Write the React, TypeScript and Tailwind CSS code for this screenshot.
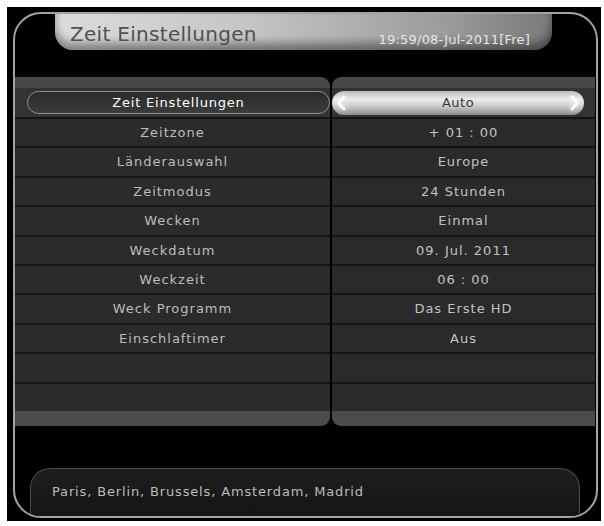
import React from 'react'

const rows: [string, string][] = [
  ['Zeitzone', '+ 01 : 00'],
  ['Länderauswahl', 'Europe'],
  ['Zeitmodus', '24 Stunden'],
  ['Wecken', 'Einmal'],
  ['Weckdatum', '09. Jul. 2011'],
  ['Weckzeit', '06 : 00'],
  ['Weck Programm', 'Das Erste HD'],
  ['Einschlaftimer', 'Aus'],
  ['', ''],
  ['', ''],
]

function Chevron({ dir }: { dir: 'left' | 'right' }) {
  return (
    <svg width="10" height="16" viewBox="0 0 10 16" className="drop-shadow-[0_0_3px_rgba(255,255,255,0.9)]">
      <path
        d={dir === 'left' ? 'M8 2 L2.5 8 L8 14' : 'M2 2 L7.5 8 L2 14'}
        fill="none"
        stroke="#ffffff"
        strokeWidth="2.6"
        strokeLinecap="round"
        strokeLinejoin="round"
      />
    </svg>
  )
}

export default function App() {
  return (
    <div className="w-[604px] h-[526px] bg-white pt-[7px] pl-[7px] pr-[3px] pb-[5px] font-['DejaVu_Sans',sans-serif]">
      <div className="h-full bg-black pt-[5px] pl-[6px] pr-[3px] pb-[3px]">
        <div className="h-full rounded-[28px] border-2 border-[#a3a3a3] flex flex-col overflow-hidden">
          {/* header tab */}
          <div className="ml-[40px] w-[497px] h-[36px] shrink-0 rounded-b-[18px] bg-[linear-gradient(to_right,#dcdcdc,#c4c4c4_40%,#9c9c9c_78%,#7a7a7a)] shadow-[inset_0_-7px_9px_rgba(0,0,0,0.4)] flex items-end justify-between pl-[15px] pr-[22px] pb-[4px]">
            <span className="text-[20px] leading-[24px] text-[#505050] tracking-[0.3px]">Zeit Einstellungen</span>
            <span className="text-[13px] leading-[15px] text-[#e6e6e6] tracking-[0.2px] mb-[-1px]">19:59/08-Jul-2011[Fre]</span>
          </div>

          {/* table */}
          <div className="mt-[27px] flex flex-col pr-[1px]">
            <div className="flex gap-[2px] h-[11px]">
              <div className="w-[315px] bg-[#484848] rounded-tr-[9px]" />
              <div className="flex-1 bg-[#484848] rounded-tl-[9px]" />
            </div>

            {/* selected row */}
            <div className="flex gap-[2px] h-[29px]">
              <div className="w-[315px] bg-[#333333] flex items-center pl-[12px]">
                <div className="w-full h-[23px] rounded-full border-[1.5px] border-[#8e8e8e] bg-[linear-gradient(to_bottom,#2a2a2a,#3c3c3c)] flex items-center justify-center">
                  <span className="text-[13px] text-white tracking-[0.8px]">Zeit Einstellungen</span>
                </div>
              </div>
              <div className="flex-1 bg-[#333333] flex items-center pr-[11px]">
                <div className="w-full h-[24px] rounded-full bg-[linear-gradient(to_bottom,#b9b9b9,#ececec_35%,#c9c9c9_65%,#8a8a8a)] flex items-center justify-between px-[4px]">
                  <Chevron dir="left" />
                  <span className="text-[13px] text-[#3a3a3a] tracking-[0.5px]">Auto</span>
                  <Chevron dir="right" />
                </div>
              </div>
            </div>

            {rows.map(([label, value], i) => (
              <div key={i} className="flex gap-[2px] h-[29.4px]">
                <div className="w-[315px] bg-[#2b2b2b] border-t-2 border-[#131313] flex items-center justify-center">
                  <span className="text-[13px] text-[#bdbdbd] tracking-[1px]">{label}</span>
                </div>
                <div className="flex-1 bg-[#2a2a2a] border-t-2 border-[#131313] flex items-center justify-center">
                  <span className="text-[13px] text-[#c2c2c2] tracking-[1px]">{value}</span>
                </div>
              </div>
            ))}

            <div className="flex gap-[2px] h-[15px]">
              <div className="w-[315px] bg-[#4b4b4b] rounded-br-[9px]" />
              <div className="flex-1 bg-[#4b4b4b] rounded-bl-[9px]" />
            </div>
          </div>

          {/* info box */}
          <div className="mt-auto ml-[15px] mr-[16px] h-[48px] rounded-t-[20px] border-t border-x border-[#4c4c4c] bg-[linear-gradient(to_bottom,#1e1e1e,#151515)] flex items-center pl-[21px] pb-[2px]">
            <span className="text-[13px] text-[#bcbcbc] tracking-[0.85px]">Paris, Berlin, Brussels, Amsterdam, Madrid</span>
          </div>
        </div>
      </div>
    </div>
  )
}
